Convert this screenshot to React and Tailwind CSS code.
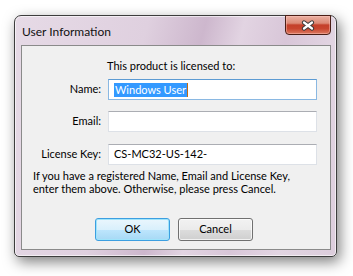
export default function App() {
  return (
    <div className="w-[353px] h-[276px] bg-white overflow-hidden pl-[14px] pt-[15px] font-['Lato','Liberation_Sans',sans-serif] text-[11px] text-black">
      <div className="w-[323px] h-[242px] rounded-t-[7px] rounded-b-[5px] border border-[#3d3d3d] bg-[linear-gradient(105deg,#e6dae6_0%,#dfd0df_35%,#cdb7cd_50%,#e2d4e2_60%,#d8c6d8_72%,#e2d5e2_85%,#dccddc_100%)] shadow-[3px_5px_14px_rgba(0,0,0,0.5),inset_0_0_0_1px_rgba(255,255,255,0.6)] flex flex-col">
        <div className="h-[29px] flex items-start justify-between">
          <div className="pl-[7px] pt-[8px] leading-[15px] text-[12px] text-[#111]">User Information</div>
          <div className="mr-[5px] -mt-px w-[46px] h-[20px] rounded-b-[4px] border border-[#4a1e16] bg-[linear-gradient(180deg,#eab0a2_0%,#dc8a76_40%,#c4402a_50%,#c8452e_70%,#dc7a62_100%)] shadow-[inset_0_0_0_1px_rgba(255,200,190,0.45)] flex items-center justify-center">
            <svg width="14" height="11" viewBox="0 0 14 11">
              <path d="M3 2.5 L11 8.5 M11 2.5 L3 8.5" stroke="#3b3b3b" strokeWidth="4.2" strokeLinecap="round" fill="none" />
              <path d="M3 2.5 L11 8.5 M11 2.5 L3 8.5" stroke="#ffffff" strokeWidth="2.2" strokeLinecap="round" fill="none" />
            </svg>
          </div>
        </div>
        <div className="ml-[6px] w-[310px] h-[205px] border border-[#8a8a8a] bg-[#f0f0f0] flex flex-col">
          <div className="mt-[12px] pl-[85px] leading-[15px]">This product is licensed to:</div>
          <div className="mt-[6px] flex items-center h-[21px]">
            <div className="w-[79px] text-right">Name:</div>
            <div className="ml-[7px] w-[209px] h-[21px] bg-white border border-[#8ab8e2] border-t-[#5c9bd3] flex items-center pl-[5px]">
              <span className="bg-[#3399ff] text-white leading-[14px] px-px border-r border-[#c36b10]">Windows User</span>
            </div>
          </div>
          <div className="mt-[11px] flex items-center h-[21px]">
            <div className="w-[79px] text-right">Email:</div>
            <div className="ml-[7px] w-[209px] h-[21px] bg-white border border-[#dde1e7] border-t-[#abadb3]" />
          </div>
          <div className="mt-[12px] flex items-center h-[21px]">
            <div className="w-[79px] text-right">License Key:</div>
            <div className="ml-[7px] w-[209px] h-[21px] bg-white border border-[#dde1e7] border-t-[#abadb3] flex items-center pl-[5px]">
              CS-MC32-US-142-
            </div>
          </div>
          <div className="mt-[4px] pl-[11px] leading-[13px]">
            <div>If you have a registered Name, Email and License Key,</div>
            <div>enter them above. Otherwise, please press Cancel.</div>
          </div>
          <div className="mt-[23px] pl-[73px] flex gap-[8px]">
            <div className="w-[75px] h-[23px] rounded-[3px] border border-[#3c9ee0] bg-[linear-gradient(180deg,#eaf6fd_0%,#d9f0fc_50%,#bee6fd_50%,#a7d9f5_100%)] shadow-[inset_0_0_0_1px_#9fe4fb] flex items-center justify-center">OK</div>
            <div className="w-[75px] h-[23px] rounded-[3px] border border-[#707070] bg-[linear-gradient(180deg,#f2f2f2_0%,#ebebeb_50%,#dddddd_50%,#cfcfcf_100%)] shadow-[inset_0_0_0_1px_rgba(255,255,255,0.7)] flex items-center justify-center">Cancel</div>
          </div>
        </div>
      </div>
    </div>
  );
}
